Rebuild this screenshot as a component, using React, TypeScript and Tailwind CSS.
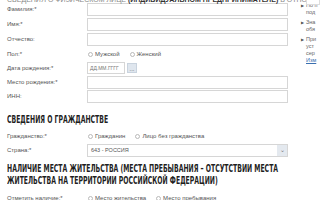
import React from "react";

const Radio = ({ label, className = "" }: { label: string; className?: string }) => (
  <span className={"flex items-center gap-[2px] " + className}>
    <span className="inline-block w-[5px] h-[5px] rounded-full border border-[#b9b9b9] bg-white" />
    <span>{label}</span>
  </span>
);

const Row = ({ label, children, h = "h-[15px]" }: { label: string; children?: React.ReactNode; h?: string }) => (
  <div className={"flex items-center " + h}>
    <div className="w-[80px] shrink-0">{label}</div>
    <div className="flex-1 flex items-center">{children}</div>
  </div>
);

const Input = () => <div className="h-[13px] w-[201px] border border-[#d6d6d6] bg-white" />;

const Heading = ({ lines }: { lines: string[] }) => (
  <div className="text-[#1f1f1f] font-bold text-[11px] leading-[12px]" style={{ fontFamily: '"DejaVu Sans Condensed", "DejaVu Sans", sans-serif' }}>
    {lines.map((l, i) => (
      <div key={i} className="whitespace-nowrap origin-left scale-x-[0.62] w-[500px]">{l}</div>
    ))}
  </div>
);

export default function App() {
  return (
    <div className="w-[320px] h-[200px] overflow-hidden bg-white relative text-[#555] text-[6px] leading-[7px]" style={{ fontFamily: '"Liberation Sans", Arial, sans-serif' }}>
      <div className="flex">
        <div className="w-[296px] shrink-0 pl-[7px]">
          <div className="h-[4px] overflow-visible relative">
            <div className="-mt-[4px] text-[7px] leading-[8px] text-[#888] whitespace-nowrap">СВЕДЕНИЯ О ФИЗИЧЕСКОМ ЛИЦЕ <b className="text-[#333]">(ИНДИВИДУАЛЬНОМ ПРЕДПРИНИМАТЕЛЕ)</b> В ОТНОШЕНИИ КОТОРОГО</div>
          </div>
          <div className="pt-[2px]">
            <Row label="Фамилия:*"><Input /></Row>
            <Row label="Имя:*"><Input /></Row>
            <Row label="Отчество:"><Input /></Row>
            <Row label="Пол:*" h="h-[14px]">
              <Radio label="Мужской" className="ml-[1px]" />
              <Radio label="Женский" className="ml-[10px]" />
            </Row>
            <Row label="Дата рождения:*" h="h-[14px]">
              <div className="h-[12px] w-[38px] border border-[#d6d6d6] bg-white flex items-center pl-[2px] text-[5px] text-[#777]">ДД.ММ.ГГГГ</div>
              <div className="ml-[2px] h-[10px] w-[10px] bg-[#dfe6ee] border border-[#c9d3de] flex items-end justify-center text-[6px] leading-[6px] text-[#555]">...</div>
            </Row>
            <Row label="Место рождения:*" h="h-[14px]"><Input /></Row>
            <Row label="ИНН:" h="h-[14px]"><Input /></Row>
          </div>
          <div className="mt-[11px]">
            <Heading lines={["СВЕДЕНИЯ О ГРАЖДАНСТВЕ"]} />
          </div>
          <div className="mt-[3px]">
            <Row label="Гражданство:*" h="h-[14px]">
              <Radio label="Гражданин" className="ml-[1px]" />
              <Radio label="Лицо без гражданства" className="ml-[10px]" />
            </Row>
            <Row label="Страна:*" h="h-[14px]">
              <div className="h-[13px] w-[201px] border border-[#d6d6d6] bg-white flex items-center pl-[3px] text-[5.5px] text-[#555]">
                <span className="flex-1">643 - РОССИЯ</span>
                <span className="h-[11px] w-[10px] bg-[#e4e9ef] flex items-center justify-center text-[6px] text-[#777]">⌄</span>
              </div>
            </Row>
          </div>
          <div className="mt-[6px]">
            <Heading lines={["НАЛИЧИЕ МЕСТА ЖИТЕЛЬСТВА (МЕСТА ПРЕБЫВАНИЯ – ОТСУТСТВИИ МЕСТА", "ЖИТЕЛЬСТВА НА ТЕРРИТОРИИ РОССИЙСКОЙ ФЕДЕРАЦИИ)"]} />
          </div>
          <div className="mt-[4px]">
            <Row label="Отметить наличие:*" h="h-[14px]">
              <Radio label="Место жительства" className="ml-[1px]" />
              <Radio label="Место пребывания" className="ml-[10px]" />
            </Row>
          </div>
        </div>
        <div className="flex-1 pl-[5px] text-[5.5px] leading-[7px] text-[#666] pt-[2px]">
          <div className="flex gap-[2px]"><span className="text-[4px] text-[#555]">▶</span><div>По п<br />под</div></div>
          <div className="flex gap-[2px] mt-[3px]"><span className="text-[4px] text-[#555]">▶</span><div>Зна<br />обя</div></div>
          <div className="flex gap-[2px] mt-[3px]"><span className="text-[4px] text-[#555]">▶</span><div>При<br />уст<br />сер<br /><span className="text-[#3a6fb0] underline">Изм</span></div></div>
        </div>
      </div>
      <div className="absolute right-0 top-0 w-[14px] h-[5px] border border-[#ddd] border-t-0 bg-white" />
    </div>
  );
}
